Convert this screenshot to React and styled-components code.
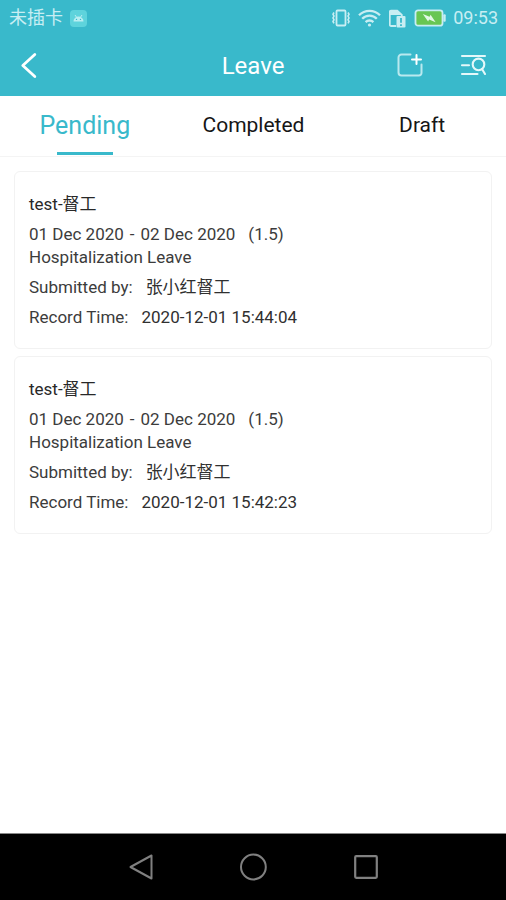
import React, { useState } from "react";
import styled, { createGlobalStyle } from "styled-components";

const TEAL = "#39b9cb";

const GlobalStyle = createGlobalStyle`
  *, *::before, *::after { box-sizing: border-box; }
  body {
    margin: 0;
    background: #ffffff;
    font-family: Roboto, "Noto Sans CJK SC", sans-serif;
  }
  button { font: inherit; border: 0; padding: 0; background: none; cursor: pointer; }
`;

const Screen = styled.div`
  min-height: 100vh;
  display: flex;
  flex-direction: column;
`;

const TopArea = styled.header`
  background: ${TEAL};
  padding-bottom: 1px;
`;

const StatusBar = styled.div`
  height: 36px;
  padding: 0 8px 0 9px;
  display: flex;
  align-items: center;
  justify-content: space-between;
  color: #c8eef3;
  font-size: 18px;
  line-height: 22px;
`;

const StatusGroup = styled.div`
  display: flex;
  align-items: center;
  gap: 7px;
`;

const TitleBar = styled.div`
  height: 59px;
  padding: 0 19px;
  display: grid;
  grid-template-columns: 1fr auto 1fr;
  align-items: center;
  color: #ffffff;
`;

const Title = styled.h1`
  margin: 0;
  font-size: 24px;
  line-height: 28px;
  font-weight: 400;
`;

const Actions = styled.div`
  display: flex;
  justify-content: flex-end;
  gap: 34px;
`;

const IconButton = styled.button`
  display: flex;
  justify-self: start;
  color: inherit;
`;

const TabList = styled.div`
  display: grid;
  grid-template-columns: repeat(3, 1fr);
  height: 61px;
  border-bottom: 1px solid #f4f4f4;
`;

const Tab = styled.button`
  display: flex;
  flex-direction: column;
  align-items: center;
  color: ${(p) => (p.$active ? TEAL : "#161616")};
  && {
    padding: 2px 0 1px 1px;
    font-size: ${(p) => (p.$active ? "25px" : "21px")};
  }

  &::after {
    content: "";
    width: 56px;
    height: 3px;
    background: ${(p) => (p.$active ? TEAL : "transparent")};
  }
`;

const TabLabel = styled.span`
  flex: 1;
  display: flex;
  align-items: center;
`;

const Records = styled.main`
  flex: 1;
  display: flex;
  flex-direction: column;
  gap: 7px;
  padding: 14px 14px 20px;
`;

const Card = styled.article`
  padding: 22px 14px 21px;
  border: 1px solid #f2f2f2;
  border-radius: 6px;
  display: flex;
  flex-direction: column;
  gap: 10px;
  color: #3c3c3c;
  font-size: 17px;
  line-height: 20px;
`;

const Name = styled.h2`
  margin: 0;
  font-size: 17px;
  line-height: 20px;
  font-weight: 400;
  color: #282828;
`;

const Period = styled.div`
  display: flex;
  flex-direction: column;
  gap: 3px;
`;

const Row = styled.div`
  display: flex;
  gap: ${(p) => (p.$wide ? "13px" : "6px")};
`;

const Value = styled.span`
  color: #303030;
`;

const NavBar = styled.nav`
  height: 67px;
  padding: 0 84px;
  display: grid;
  grid-template-columns: repeat(3, 1fr);
  justify-items: center;
  align-items: center;
  background: #000000;
  border-top: 1px solid #888888;
  color: #808080;
`;

const NavButton = styled.button`
  display: flex;
  color: inherit;
`;

const AndroidBadge = () => (
  <svg width="17" height="17" viewBox="0 0 17 17" aria-hidden="true">
    <rect width="17" height="17" rx="4" fill="#5ed3dc" />
    <path d="M3.5 11.5a5 5 0 0 1 10 0z" fill="#b9eef2" />
    <path d="M5 5l1.5 2.2M12 5l-1.5 2.2" stroke="#b9eef2" strokeWidth="1" />
    <circle cx="6.5" cy="9.4" r=".7" fill="#39b9cb" />
    <circle cx="10.5" cy="9.4" r=".7" fill="#39b9cb" />
  </svg>
);

const VibrateIcon = () => (
  <svg width="20" height="18" viewBox="0 0 20 18" fill="none" stroke="currentColor" aria-hidden="true">
    <rect x="5.5" y="1.5" width="9" height="15" rx="1" strokeWidth="1.8" />
    <path d="M3 3.5l-1 1.8 1 1.8-1 1.8 1 1.8-1 1.8 1 1.8M17 3.5l1 1.8-1 1.8 1 1.8-1 1.8 1 1.8-1 1.8" strokeWidth="1.6" />
  </svg>
);

const WifiIcon = () => (
  <svg width="24" height="18" viewBox="1 0 24 18" fill="none" stroke="currentColor" strokeWidth="2.3" aria-hidden="true">
    <path d="M2 6.3a14.8 14.8 0 0 1 21 0M5.2 9.8a10 10 0 0 1 14.6 0M8.6 13.1a5.5 5.5 0 0 1 7.8 0" />
    <circle cx="12.5" cy="16" r="1.6" fill="currentColor" stroke="none" />
  </svg>
);

const SimAlertIcon = () => (
  <svg width="18" height="19" viewBox="1 0 18 19" aria-hidden="true">
    <path d="M8 17H3a1.2 1.2 0 0 1-1.2-1.2V2.8A1.2 1.2 0 0 1 3 1.6h6.2L13.8 6v1" fill="none" stroke="currentColor" strokeWidth="1.8" />
    <path d="M1.8 1.6h7.4L13.8 6H1.8z" fill="currentColor" />
    <rect x="8.5" y="7" width="9" height="11.5" rx="1" fill="currentColor" />
    <path d="M13 9v4.8M13 15.2v1.8" stroke="#39b9cb" strokeWidth="1.8" />
  </svg>
);

const BatteryIcon = () => (
  <svg width="32" height="18" viewBox="0 0 32 18" aria-hidden="true">
    <rect x="1.5" y="1.3" width="27" height="15.4" rx="2.5" fill="#68c653" stroke="currentColor" strokeWidth="1.8" />
    <rect x="29.3" y="5.3" width="2.4" height="7.4" rx="1" fill="currentColor" />
    <path d="M8.8 5l6.8 2.7 1-2 5 7.5-6.5-2.6-1 2z" fill="#e2f8e5" />
  </svg>
);

const BackIcon = () => (
  <svg width="20" height="28" viewBox="3 0 20 28" fill="none" stroke="currentColor" strokeWidth="2.8" strokeLinecap="round" strokeLinejoin="round" aria-hidden="true">
    <path d="M18.8 2.5L6.8 13.5l12 11" />
  </svg>
);

const AddIcon = () => (
  <svg width="28" height="26" viewBox="0 1 28 26" fill="none" stroke="#b9e9ef" strokeWidth="2" strokeLinecap="round" strokeLinejoin="round" aria-hidden="true">
    <path d="M13.5 2.5H4.5a3 3 0 0 0-3 3v15a3 3 0 0 0 3 3H22a2.5 2.5 0 0 0 2.5-2.5v-8.5" />
    <path d="M19.5 3v9M15 7.5h9" stroke="#ffffff" />
  </svg>
);

const SearchListIcon = () => (
  <svg width="28" height="26" viewBox="0 1 28 26" fill="none" stroke="#e4f8fa" strokeWidth="2.1" strokeLinecap="round" aria-hidden="true">
    <path d="M3 4h23M3 13.2h7M3 22h15.5" />
    <circle cx="19.5" cy="12.4" r="5.8" />
    <path d="M23 17l3 5" />
  </svg>
);

const NavBackIcon = () => (
  <svg width="28" height="28" viewBox="0 0 28 28" fill="none" stroke="currentColor" strokeWidth="2" strokeLinejoin="round" aria-hidden="true">
    <path d="M25.5 2.5v23L4.5 14z" />
  </svg>
);

const NavHomeIcon = () => (
  <svg width="28" height="28" viewBox="0 0 28 28" fill="none" stroke="currentColor" strokeWidth="2" aria-hidden="true">
    <circle cx="14.4" cy="14" r="12.4" />
  </svg>
);

const NavRecentIcon = () => (
  <svg width="28" height="28" viewBox="0 0 28 28" fill="none" stroke="currentColor" strokeWidth="2.2" aria-hidden="true">
    <rect x="3.2" y="3.2" width="21.6" height="21.6" rx="1" />
  </svg>
);

const tabs = ["Pending", "Completed", "Draft"];

const leaves = [
  { id: 1, name: "test-督工", from: "01 Dec 2020", to: "02 Dec 2020", days: "(1.5)", type: "Hospitalization Leave", by: "张小红督工", time: "2020-12-01 15:44:04" },
  { id: 2, name: "test-督工", from: "01 Dec 2020", to: "02 Dec 2020", days: "(1.5)", type: "Hospitalization Leave", by: "张小红督工", time: "2020-12-01 15:42:23" },
];

function LeaveCard({ leave }) {
  return (
    <Card>
      <Name>{leave.name}</Name>
      <Period>
        <Row $wide>
          <Row>
            <span>{leave.from}</span>
            <span>-</span>
            <span>{leave.to}</span>
          </Row>
          <span>{leave.days}</span>
        </Row>
        <span>{leave.type}</span>
      </Period>
      <Row $wide>
        <span>Submitted by:</span>
        <Value>{leave.by}</Value>
      </Row>
      <Row $wide>
        <span>Record Time:</span>
        <Value>{leave.time}</Value>
      </Row>
    </Card>
  );
}

export default function App() {
  const [active, setActive] = useState("Pending");
  return (
    <Screen>
      <GlobalStyle />
      <TopArea>
        <StatusBar>
          <StatusGroup>
            <span>未插卡</span>
            <AndroidBadge />
          </StatusGroup>
          <StatusGroup>
            <VibrateIcon />
            <WifiIcon />
            <SimAlertIcon />
            <BatteryIcon />
            <span>09:53</span>
          </StatusGroup>
        </StatusBar>
        <TitleBar>
          <IconButton aria-label="Back"><BackIcon /></IconButton>
          <Title>Leave</Title>
          <Actions>
            <IconButton aria-label="New leave"><AddIcon /></IconButton>
            <IconButton aria-label="Search"><SearchListIcon /></IconButton>
          </Actions>
        </TitleBar>
      </TopArea>
      <TabList role="tablist">
        {tabs.map((tab) => (
          <Tab
            key={tab}
            role="tab"
            aria-selected={tab === active}
            $active={tab === active}
            onClick={() => setActive(tab)}
          >
            <TabLabel>{tab}</TabLabel>
          </Tab>
        ))}
      </TabList>
      <Records>
        {leaves.map((leave) => (
          <LeaveCard key={leave.id} leave={leave} />
        ))}
      </Records>
      <NavBar aria-label="System">
        <NavButton aria-label="Back"><NavBackIcon /></NavButton>
        <NavButton aria-label="Home"><NavHomeIcon /></NavButton>
        <NavButton aria-label="Recent apps"><NavRecentIcon /></NavButton>
      </NavBar>
    </Screen>
  );
}
